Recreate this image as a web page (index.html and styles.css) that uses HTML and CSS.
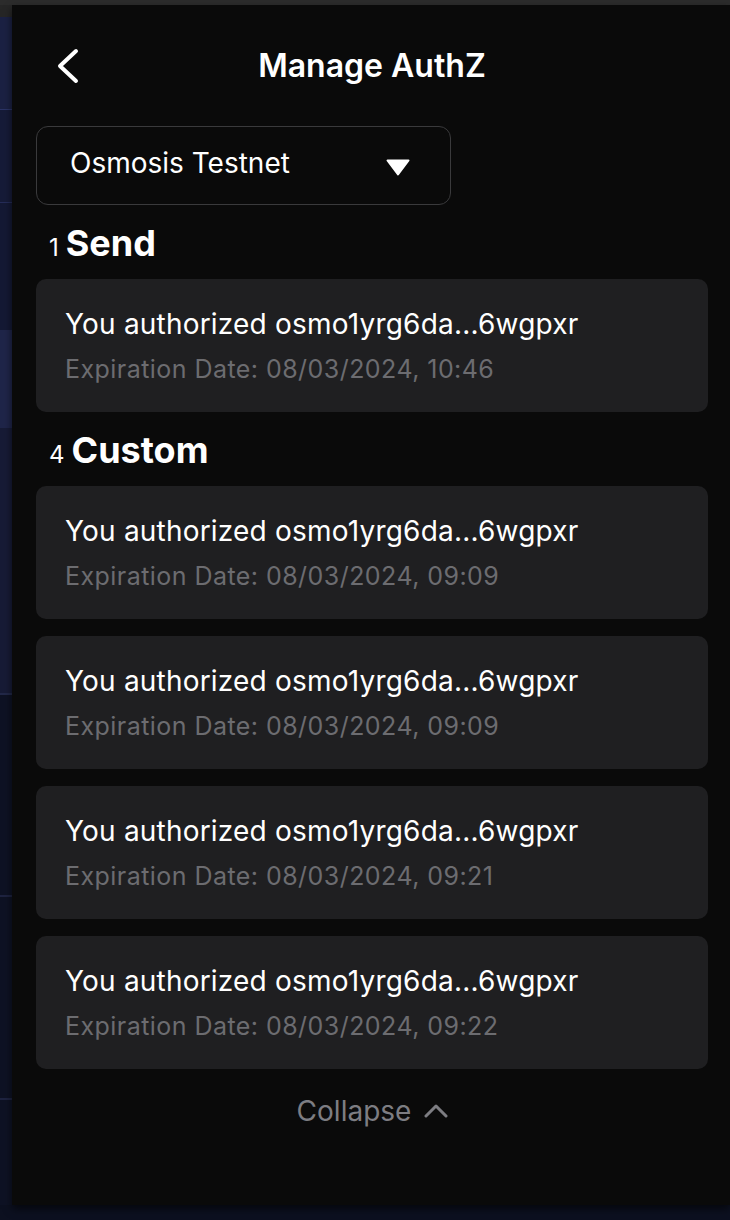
FILE: index.html
```html
<!DOCTYPE html>
<html lang="en">
<head>
<meta charset="utf-8">
<title>Manage AuthZ</title>
<link rel="stylesheet" href="styles.css">
</head>
<body>
<div class="topbar"></div>
<div class="main">
  <div class="sidebar">
    <div class="seg seg-gray"></div>
    <div class="seg seg-a"></div>
    <div class="seg seg-b"></div>
    <div class="seg seg-c"></div>
    <div class="seg seg-d"></div>
    <div class="seg seg-e"></div>
    <div class="seg seg-f"></div>
    <div class="seg seg-g"></div>
    <div class="seg seg-h"></div>
  </div>
  <div class="panel">
    <header class="header">
      <button class="back" aria-label="Back">
        <svg width="24" height="36" viewBox="0 0 24 36"><polyline points="20,3 4,18 20,33" fill="none" stroke="#fff" stroke-width="4" stroke-linecap="round" stroke-linejoin="round"/></svg>
      </button>
      <h1 class="title">Manage AuthZ</h1>
    </header>
    <div class="content">
      <div class="select">
        <span class="select-label">Osmosis Testnet</span>
        <svg class="caret" width="24" height="17" viewBox="0 0 24 17"><path d="M1.5 1.5 H22.5 L12 15.5 Z" fill="#fff" stroke="#fff" stroke-width="2" stroke-linejoin="round"/></svg>
      </div>

      <h2 class="section"><span class="count">1</span>Send</h2>
      <div class="card">
        <div class="card-title">You authorized osmo1yrg6da...6wgpxr</div>
        <div class="card-sub">Expiration Date: 08/03/2024, 10:46</div>
      </div>

      <h2 class="section"><span class="count">4</span>Custom</h2>
      <div class="list">
        <div class="card">
          <div class="card-title">You authorized osmo1yrg6da...6wgpxr</div>
          <div class="card-sub">Expiration Date: 08/03/2024, 09:09</div>
        </div>
        <div class="card">
          <div class="card-title">You authorized osmo1yrg6da...6wgpxr</div>
          <div class="card-sub">Expiration Date: 08/03/2024, 09:09</div>
        </div>
        <div class="card">
          <div class="card-title">You authorized osmo1yrg6da...6wgpxr</div>
          <div class="card-sub">Expiration Date: 08/03/2024, 09:21</div>
        </div>
        <div class="card">
          <div class="card-title">You authorized osmo1yrg6da...6wgpxr</div>
          <div class="card-sub">Expiration Date: 08/03/2024, 09:22</div>
        </div>
      </div>

      <div class="collapse">
        <span>Collapse</span>
        <svg width="26" height="15" viewBox="0 0 26 15"><polyline points="3,13 13,3 23,13" fill="none" stroke="#7d7d82" stroke-width="3" stroke-linecap="round" stroke-linejoin="round"/></svg>
      </div>
    </div>
  </div>
</div>
<div class="bottombar"></div>
</body>
</html>
```

FILE: styles.css
```css
* { box-sizing: border-box; }
html, body { margin: 0; padding: 0; }
body {
  width: 730px;
  height: 1220px;
  overflow: hidden;
  background: #0c1020;
  font-family: "Inter", "Noto Sans", "Liberation Sans", sans-serif;
  color: #fff;
}
.topbar {
  height: 5px;
  background: #2c2c2c;
}
.main {
  display: flex;
  height: 1200px;
}
.sidebar {
  width: 12px;
  display: flex;
  flex-direction: column;
}
.seg { flex: none; }
.seg-gray { height: 12px; background: #262626; }
.seg-a { height: 93px; background: #1b2143; border-bottom: 1px solid #2b3466; }
.seg-b { height: 93px; background: #161b38; border-bottom: 1px solid #252c58; }
.seg-c { height: 127px; background: #141934; }
.seg-d { height: 98px; background: #1f2549; }
.seg-e { height: 267px; background: #171b36; border-bottom: 2px solid #222848; }
.seg-f { height: 202px; background: #0e1224; border-bottom: 2px solid #1e2340; }
.seg-g { height: 203px; background: #0e1224; border-bottom: 2px solid #1e2340; }
.seg-h { flex: 1; background: #0e1224; }
.panel {
  flex: 1;
  background: #0a0a0a;
  box-shadow: 0 4px 8px rgba(0,0,0,0.6);
  position: relative;
  z-index: 1;
}
.header {
  height: 121px;
  display: flex;
  align-items: center;
  justify-content: center;
  position: relative;
}
.back {
  position: absolute;
  left: 44px;
  top: 43px;
  padding: 0;
  border: 0;
  background: none;
  display: flex;
}
.title {
  margin: 0;
  font-size: 32px;
  font-weight: 600;
  line-height: 38px;
  padding-left: 2px;
}
.content {
  padding: 0 22px 0 24px;
}
.select {
  width: 415px;
  height: 79px;
  border: 1.5px solid #3a3a3c;
  border-radius: 12px;
  display: flex;
  align-items: center;
  justify-content: space-between;
  padding: 0 40px 0 33px;
}
.select-label {
  font-size: 28px;
  line-height: 36px;
  color: #fff;
  margin-top: -5px;
}
.caret { margin-top: 4px; }
.section {
  margin: 20px 0 18px;
  height: 36px;
  display: flex;
  align-items: baseline;
  font-size: 36px;
  font-weight: 700;
  line-height: 36px;
  padding-left: 13px;
}
.section .count {
  font-size: 24px;
  font-weight: 400;
  line-height: 24px;
  margin-right: 7px;
}
.list {
  display: flex;
  flex-direction: column;
  gap: 17px;
}
.card {
  background: #1f1f21;
  border-radius: 10px;
  padding: 27px 28px 0 29px;
  height: 133px;
}
.card-title {
  font-size: 28px;
  line-height: 36px;
  letter-spacing: 0.2px;
  color: #fff;
}
.card-sub {
  margin-top: 11px;
  font-size: 25px;
  line-height: 32px;
  letter-spacing: 0.45px;
  color: #6c6c70;
}
.collapse {
  margin-top: 24px;
  display: flex;
  align-items: center;
  justify-content: center;
  gap: 12px;
  color: #7d7d82;
  font-size: 28px;
  line-height: 36px;
  padding-left: 2px;
}
.collapse svg { margin-top: -2px; }
.bottombar {
  height: 15px;
  background: #0c1020;
}
```
